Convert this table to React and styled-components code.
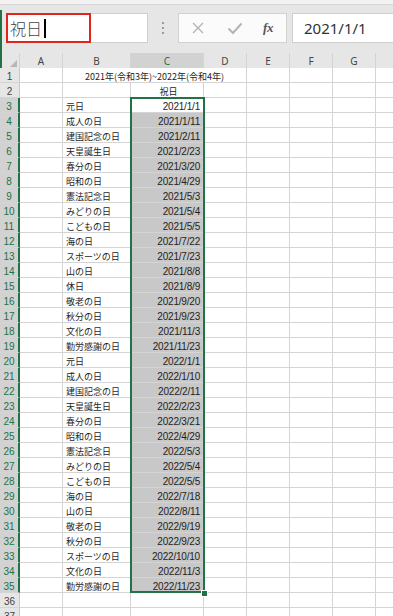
import React from 'react';
import styled, { createGlobalStyle } from 'styled-components';

const GREEN = '#217346';
const GRID = '#d4d4d4';
const COLS = '20px 43px 68px 73px 43px 43px 43px 43px 43px';
const HEAD_COLS = '18px 43px 68px 73px 43px 43px 43px 43px 43px';

const Global = createGlobalStyle`
  html, body { margin: 0; padding: 0; background: #ffffff; }
  body { font-family: "Noto Sans CJK JP", "Noto Sans", sans-serif; }
  * { box-sizing: border-box; }
`;

const Screen = styled.div`
  width: 393px;
  height: 616px;
  overflow: hidden;
  background: #e6e6e6;
  display: flex;
  flex-direction: column;
`;

const TopStrip = styled.div`
  flex: none;
  height: 10px;
  background: linear-gradient(#f2f2f2 0 4px, #d7d7d7 4px 5px, #e6e6e6 5px);
`;

const Upper = styled.div`
  flex: none;
  border-left: 2px solid ${GREEN};
  display: flex;
  flex-direction: column;
`;

const FormulaRow = styled.div`
  display: flex;
  align-items: stretch;
  height: 43px;
  padding: 3px 0 10px 4px;
`;

const NameBox = styled.div`
  position: relative;
  width: 142px;
  background: #ffffff;
  border: 1px solid #cfcfcf;
  display: flex;
  align-items: center;
  padding-left: 3px;
  font-family: "Noto Sans CJK JP", sans-serif;
  font-weight: 300;
  font-size: 16px;
  color: #444444;
`;

const Caret = styled.span`
  display: inline-block;
  width: 2px;
  height: 19px;
  margin-left: 2px;
  background: #000000;
`;

const Highlight = styled.div`
  position: absolute;
  top: -1px;
  bottom: -1px;
  left: -1px;
  width: 85px;
  border: 2px solid #e1251b;
  pointer-events: none;
`;

const Divider = styled.div`
  width: 30px;
  display: flex;
  flex-direction: column;
  align-items: center;
  justify-content: center;
  gap: 3px;
`;

const Dot = styled.span`
  width: 2px;
  height: 2px;
  background: #9c9c9c;
`;

const ButtonGroup = styled.div`
  width: 109px;
  background: #fbfbfb;
  border: 1px solid #d2d2d2;
  display: grid;
  grid-template-columns: 37px 38px 1fr;
  align-items: center;
  justify-items: center;
`;

const FxLabel = styled.span`
  font-family: "Liberation Serif", serif;
  font-style: italic;
  font-weight: bold;
  font-size: 13px;
  color: #555555;
  letter-spacing: -0.5px;
  padding-right: 4px;
`;

const FormulaInput = styled.div`
  flex: 1;
  margin-left: 5px;
  margin-right: -10px;
  background: #ffffff;
  border: 1px solid #cfcfcf;
  display: flex;
  align-items: center;
  padding-left: 11px;
  font-family: "Noto Sans", sans-serif;
  font-size: 15px;
  color: #333333;
`;

const HeaderRow = styled.div`
  display: grid;
  grid-template-columns: ${HEAD_COLS};
  width: 428px;
  height: 15px;
`;

const Corner = styled.div`
  position: relative;
  background: #e6e6e6;
  border-right: 1px solid ${GRID};
  border-bottom: 1px solid #c8c8c8;
  &::after {
    content: '';
    position: absolute;
    right: 2px;
    bottom: 2px;
    border-style: solid;
    border-width: 0 0 7px 7px;
    border-color: transparent transparent #b7b7b7 transparent;
  }
`;

const ColHead = styled.div`
  background: ${(p) => (p.$active ? '#d2d2d2' : '#e6e6e6')};
  border-right: 1px solid ${GRID};
  border-bottom: ${(p) => (p.$active ? `2px solid ${GREEN}` : '1px solid #c8c8c8')};
  color: ${(p) => (p.$active ? GREEN : '#444444')};
  font-family: "Noto Sans", sans-serif;
  font-size: 10px;
  line-height: 14px;
  padding-top: 1px;
  text-align: center;
`;

const Body = styled.div`
  position: relative;
  background: #ffffff;
  width: 430px;
`;

const Row = styled.div`
  display: grid;
  grid-template-columns: ${COLS};
  height: 15px;
`;

const RowHead = styled.div`
  background: ${(p) => (p.$active ? '#d2d2d2' : '#e6e6e6')};
  border-right: ${(p) => (p.$active ? `2px solid ${GREEN}` : `1px solid #c8c8c8`)};
  border-bottom: 1px solid ${GRID};
  color: ${(p) => (p.$active ? GREEN : '#444444')};
  font-family: "Liberation Sans", sans-serif;
  font-size: 10px;
  line-height: 13px;
  padding-top: 2px;
  text-align: center;
  overflow: hidden;
`;

const Cell = styled.div`
  grid-column: ${(p) => (p.$span ? `span ${p.$span}` : 'auto')};
  background: ${(p) => (p.$shade ? '#c8c8c8' : '#ffffff')};
  border-right: 1px solid ${GRID};
  border-bottom: 1px solid ${GRID};
  white-space: nowrap;
  overflow: hidden;
  line-height: 13px;
  padding-top: 2px;
  color: #1e1e1e;
`;

const TextCell = styled(Cell)`
  font-family: "Noto Sans CJK JP", sans-serif;
  font-size: 9px;
  padding-left: 3px;
  text-align: ${(p) => p.$align || 'left'};
`;

const NumCell = styled(Cell)`
  font-family: "Liberation Sans", sans-serif;
  font-size: 10px;
  letter-spacing: -0.2px;
  text-align: right;
  padding-right: 3px;
`;

const TitleCell = styled(Cell)`
  font-family: "Noto Sans CJK JP", sans-serif;
  font-size: 9px;
  text-align: center;
`;

const Selection = styled.div`
  position: absolute;
  left: 130px;
  top: 29px;
  width: 75px;
  height: 496px;
  border: 2px solid ${GREEN};
  pointer-events: none;
`;

const FillHandle = styled.div`
  position: absolute;
  right: -4px;
  bottom: -5px;
  width: 5px;
  height: 5px;
  background: ${GREEN};
  box-shadow: 0 0 0 1px #ffffff;
`;

const DATA = [
  ['元日', '2021/1/1'],
  ['成人の日', '2021/1/11'],
  ['建国記念の日', '2021/2/11'],
  ['天皇誕生日', '2021/2/23'],
  ['春分の日', '2021/3/20'],
  ['昭和の日', '2021/4/29'],
  ['憲法記念日', '2021/5/3'],
  ['みどりの日', '2021/5/4'],
  ['こどもの日', '2021/5/5'],
  ['海の日', '2021/7/22'],
  ['スポーツの日', '2021/7/23'],
  ['山の日', '2021/8/8'],
  ['休日', '2021/8/9'],
  ['敬老の日', '2021/9/20'],
  ['秋分の日', '2021/9/23'],
  ['文化の日', '2021/11/3'],
  ['勤労感謝の日', '2021/11/23'],
  ['元日', '2022/1/1'],
  ['成人の日', '2022/1/10'],
  ['建国記念の日', '2022/2/11'],
  ['天皇誕生日', '2022/2/23'],
  ['春分の日', '2022/3/21'],
  ['昭和の日', '2022/4/29'],
  ['憲法記念日', '2022/5/3'],
  ['みどりの日', '2022/5/4'],
  ['こどもの日', '2022/5/5'],
  ['海の日', '2022/7/18'],
  ['山の日', '2022/8/11'],
  ['敬老の日', '2022/9/19'],
  ['秋分の日', '2022/9/23'],
  ['スポーツの日', '2022/10/10'],
  ['文化の日', '2022/11/3'],
  ['勤労感謝の日', '2022/11/23'],
];

const LETTERS = ['A', 'B', 'C', 'D', 'E', 'F', 'G', ''];

function Blanks({ n }) {
  return Array.from({ length: n }, (_, i) => <Cell key={i} />);
}

export default function App() {
  return (
    <>
      <Global />
      <Screen>
        <TopStrip />
        <Upper>
          <FormulaRow>
            <NameBox>
              祝日
              <Caret />
              <Highlight />
            </NameBox>
            <Divider>
              <Dot />
              <Dot />
              <Dot />
            </Divider>
            <ButtonGroup>
              <svg width="14" height="14" viewBox="0 0 14 14">
                <path d="M2 2 L12 12 M12 2 L2 12" stroke="#b4b4b4" strokeWidth="1.4" fill="none" />
              </svg>
              <svg width="16" height="14" viewBox="0 0 16 14">
                <path d="M1.5 7.5 L6 12 L14.5 2.5" stroke="#b4b4b4" strokeWidth="2" fill="none" />
              </svg>
              <FxLabel>fx</FxLabel>
            </ButtonGroup>
            <FormulaInput>2021/1/1</FormulaInput>
          </FormulaRow>
          <HeaderRow>
            <Corner />
            {LETTERS.map((l, i) => (
              <ColHead key={i} $active={l === 'C'}>
                {l}
              </ColHead>
            ))}
          </HeaderRow>
        </Upper>
        <Body>
          <Row>
            <RowHead>1</RowHead>
            <Cell />
            <TitleCell $span={3}>2021年(令和3年)~2022年(令和4年)</TitleCell>
            <Blanks n={4} />
          </Row>
          <Row>
            <RowHead>2</RowHead>
            <Cell />
            <Cell />
            <TextCell $align="center">祝日</TextCell>
            <Blanks n={5} />
          </Row>
          {DATA.map(([name, date], i) => (
            <Row key={i}>
              <RowHead $active>{i + 3}</RowHead>
              <Cell />
              <TextCell>{name}</TextCell>
              <NumCell $shade={i > 0}>{date}</NumCell>
              <Blanks n={5} />
            </Row>
          ))}
          {[36, 37].map((n) => (
            <Row key={n}>
              <RowHead>{n}</RowHead>
              <Blanks n={8} />
            </Row>
          ))}
          <Selection>
            <FillHandle />
          </Selection>
        </Body>
      </Screen>
    </>
  );
}
